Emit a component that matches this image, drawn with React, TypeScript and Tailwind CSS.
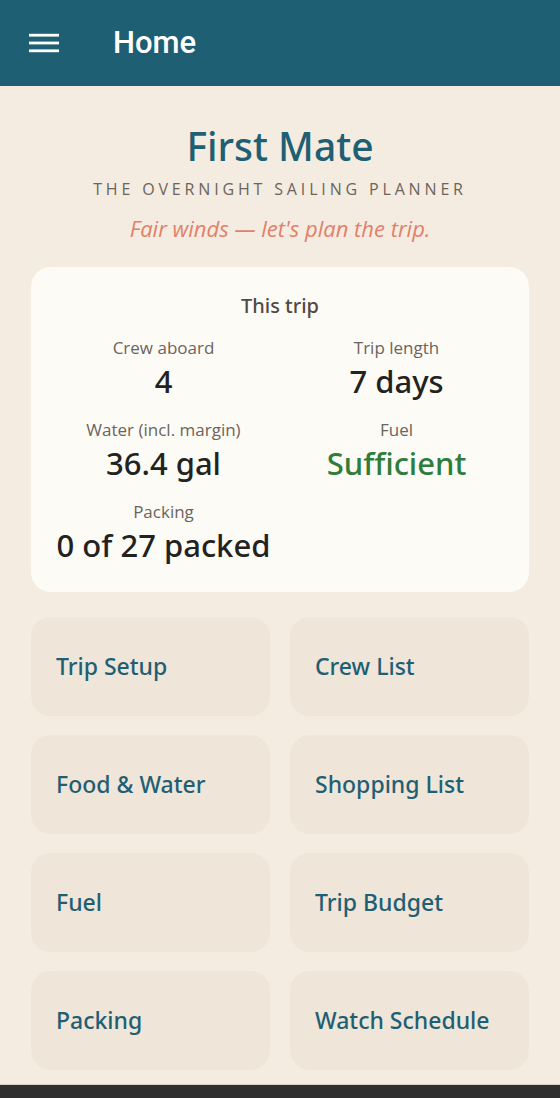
import React from 'react';

const stats = [
    { label: 'Crew aboard', value: '4' },
    { label: 'Trip length', value: '7 days' },
    { label: 'Water (incl. margin)', value: '36.4 gal' },
    { label: 'Fuel', value: 'Sufficient', good: true },
    { label: 'Packing', value: '0 of 27 packed' },
];

const tiles = [
    'Trip Setup',
    'Crew List',
    'Food & Water',
    'Shopping List',
    'Fuel',
    'Trip Budget',
    'Packing',
    'Watch Schedule',
];

export default function App() {
    return (
        <div className="h-[1098px] flex flex-col bg-[#f4ece0] font-['Noto_Sans','Open_Sans',sans-serif] overflow-hidden">
            {/* App bar */}
            <header className="h-[86px] shrink-0 bg-[#1f5f73] flex items-center px-[29px]">
                <svg width="30" height="20" viewBox="0 0 30 20" className="text-white">
                    <rect x="0" y="0.8" width="30" height="2.8" fill="currentColor" />
                    <rect x="0" y="8.6" width="30" height="2.8" fill="currentColor" />
                    <rect x="0" y="16.4" width="30" height="2.8" fill="currentColor" />
                </svg>
                <h1 className="ml-[54px] text-white text-[31px] font-medium font-['Roboto',sans-serif]">Home</h1>
            </header>

            <main className="flex-1 px-[31px] pt-[33px]">
                <div className="text-center">
                    <h2 className="text-[39px] leading-[54px] text-[#1f5f73] font-medium">First Mate</h2>
                    <p className="mt-[4px] text-[16px] leading-[24px] tracking-[0.24em] text-[#6b645c] uppercase font-['Open_Sans',sans-serif]">
                        The overnight sailing planner
                    </p>
                    <p className="mt-[12px] text-[22px] leading-[30px] italic text-[#e2806a] font-['Open_Sans',sans-serif]">
                        Fair winds — let's plan the trip.
                    </p>
                </div>

                <section className="mt-[24px] bg-[#fdfbf6] rounded-[20px] px-[24px] pt-[24px] pb-[27px]">
                    <h3 className="text-center text-[20px] leading-[30px] font-medium text-[#4f4a45]">This trip</h3>
                    <div className="mt-[14px] grid grid-cols-2 gap-x-[16px] gap-y-[16px]">
                        {stats.map((s) => (
                            <div key={s.label} className="text-center">
                                <div className="text-[17px] leading-[26px] text-[#6b645c] font-['Open_Sans',sans-serif]">
                                    {s.label}
                                </div>
                                <div
                                    className={`text-[31px] leading-[40px] font-medium ${s.good ? 'text-[#2e7d3a]' : 'text-[#222]'}`}
                                >
                                    {s.value}
                                </div>
                            </div>
                        ))}
                    </div>
                </section>

                <nav className="mt-[25px] grid grid-cols-2 gap-x-[20px] gap-y-[19px]">
                    {tiles.map((t) => (
                        <button
                            key={t}
                            className="h-[99px] rounded-[20px] bg-[#efe5d8] text-left pl-[25px] text-[23px] font-medium text-[#1f5f73]"
                        >
                            {t}
                        </button>
                    ))}
                </nav>
            </main>

            <div className="h-[14px] shrink-0 bg-[#2f2f2f] border-t border-[#d8d0c4]" />
        </div>
    );
}
